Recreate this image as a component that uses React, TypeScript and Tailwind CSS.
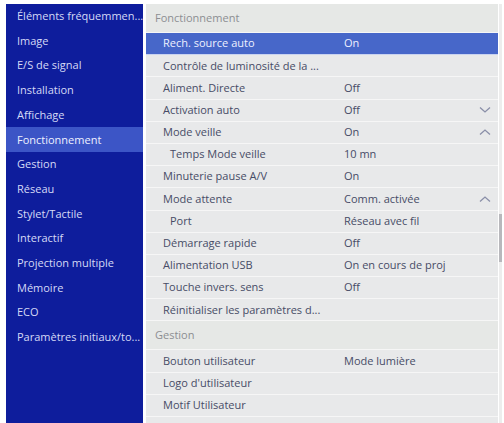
import React from "react";

type Row = {
  label: string;
  value?: string;
  indent?: boolean;
  chevron?: "up" | "down";
  selected?: boolean;
};

const categories = [
  "Éléments fréquemmen...",
  "Image",
  "E/S de signal",
  "Installation",
  "Affichage",
  "Fonctionnement",
  "Gestion",
  "Réseau",
  "Stylet/Tactile",
  "Interactif",
  "Projection multiple",
  "Mémoire",
  "ECO",
  "Paramètres initiaux/to...",
];

const operation: Row[] = [
  { label: "Rech. source auto", value: "On", selected: true },
  { label: "Contrôle de luminosité de la ..." },
  { label: "Aliment. Directe", value: "Off" },
  { label: "Activation auto", value: "Off", chevron: "down" },
  { label: "Mode veille", value: "On", chevron: "up" },
  { label: "Temps Mode veille", value: "10 mn", indent: true },
  { label: "Minuterie pause A/V", value: "On" },
  { label: "Mode attente", value: "Comm. activée", chevron: "up" },
  { label: "Port", value: "Réseau avec fil", indent: true },
  { label: "Démarrage rapide", value: "Off" },
  { label: "Alimentation USB", value: "On en cours de proj" },
  { label: "Touche invers. sens", value: "Off" },
  { label: "Réinitialiser les paramètres d..." },
];

const management: Row[] = [
  { label: "Bouton utilisateur", value: "Mode lumière" },
  { label: "Logo d'utilisateur" },
  { label: "Motif Utilisateur" },
  { label: "" },
];

function Chevron({ dir }: { dir: "up" | "down" }) {
  return (
    <svg width="12" height="8" viewBox="0 0 12 8" className="text-[#8a8fa8]">
      <path
        d={dir === "down" ? "M1 1.5 L6 6 L11 1.5" : "M1 6.5 L6 2 L11 6.5"}
        fill="none"
        stroke="currentColor"
        strokeWidth="1.3"
      />
    </svg>
  );
}

function SettingRow({ row }: { row: Row }) {
  return (
    <div
      className={`flex h-[22.2px] shrink-0 items-center border-b ${
        row.selected
          ? "bg-[#4767c9] text-[#eef1ff] border-[#c9d3f0]"
          : "bg-[#e8e9ea] text-[#474c66] border-[#f6f6f6]"
      }`}
    >
      <div className={`w-[198px] truncate ${row.indent ? "pl-[24px]" : "pl-[17px]"}`}>
        {row.label}
      </div>
      <div className="flex-1 truncate">{row.value}</div>
      <div className="flex w-[26px] justify-center">
        {row.chevron ? <Chevron dir={row.chevron} /> : null}
      </div>
    </div>
  );
}

function SectionHeader({ title }: { title: string }) {
  return (
    <div className="flex h-[29px] shrink-0 items-center border-b border-[#f6f6f6] bg-[#e6e8e6] pl-[9px] text-[#8c8e92]">
      {title}
    </div>
  );
}

export default function App() {
  return (
    <div
      className="flex h-[423px] w-[504px] overflow-hidden bg-white pl-[6px] pt-[4px] text-[11px]"
      style={{ fontFamily: '"Open Sans", "Noto Sans", sans-serif' }}
    >
      {/* category list */}
      <div className="w-[137px] shrink-0 bg-[#0e1d9c]">
        {categories.map((c) => (
          <div
            key={c}
            className={`flex h-[24.7px] items-center truncate pl-[11px] ${
              c === "Fonctionnement" ? "bg-[#3c55c6] text-[#eef1ff]" : "text-[#d5daf6]"
            }`}
          >
            {c}
          </div>
        ))}
      </div>

      {/* settings panel */}
      <div className="ml-[3px] flex w-[352px] shrink-0 flex-col">
        <SectionHeader title="Fonctionnement" />
        {operation.map((r) => (
          <SettingRow key={r.label} row={r} />
        ))}
        <SectionHeader title="Gestion" />
        {management.map((r, i) => (
          <SettingRow key={i} row={r} />
        ))}
      </div>

      {/* scrollbar */}
      <div className="relative ml-[1px] w-[3px] bg-[#ededed]">
        <div className="absolute left-0 top-[210px] h-[48px] w-[3px] bg-[#b8b8bc]" />
      </div>
    </div>
  );
}
